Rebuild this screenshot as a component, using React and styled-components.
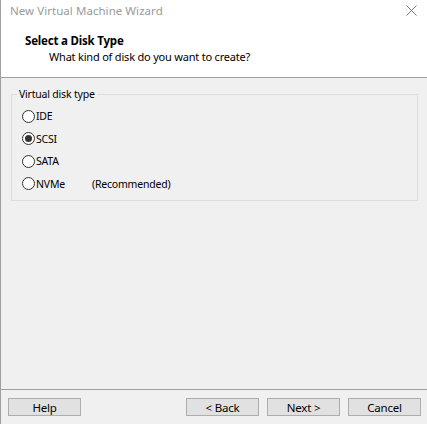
import React from 'react';
import styled, { createGlobalStyle } from 'styled-components';

const GlobalStyle = createGlobalStyle`
  html, body {
    margin: 0;
    padding: 0;
    background: #f0f0f0;
  }
  body {
    font-family: 'Segoe UI', 'Noto Sans', 'Liberation Sans', sans-serif;
    font-size: 11px;
    letter-spacing: -0.2px;
    color: #000;
  }
`;

const options = [
  { id: 'ide', label: 'IDE' },
  { id: 'scsi', label: 'SCSI', checked: true },
  { id: 'sata', label: 'SATA' },
  { id: 'nvme', label: 'NVMe', note: '(Recommended)' },
];

export default function App() {
  return (
    <>
      <GlobalStyle />
      <Window>
        <TitleBar>
          <Title>New Virtual Machine Wizard</Title>
          <CloseButton aria-label="Close">
            <svg width="11" height="11" viewBox="0 0 11 11">
              <path d="M0.5 0.5 L10.5 10.5 M10.5 0.5 L0.5 10.5" stroke="#777" strokeWidth="1" />
            </svg>
          </CloseButton>
        </TitleBar>
        <Header>
          <HeaderTitle>Select a Disk Type</HeaderTitle>
          <HeaderSub>What kind of disk do you want to create?</HeaderSub>
        </Header>
        <Body>
          <GroupBox>
            <Legend>Virtual disk type</Legend>
            {options.map((o) => (
              <RadioRow key={o.id}>
                <Radio checked={o.checked} />
                <RadioLabel>{o.label}</RadioLabel>
                {o.note && <Note>{o.note}</Note>}
              </RadioRow>
            ))}
          </GroupBox>
        </Body>
        <Footer>
          <Button>Help</Button>
          <Spacer />
          <Button>&lt; Back</Button>
          <Button>Next &gt;</Button>
          <Button>Cancel</Button>
        </Footer>
      </Window>
    </>
  );
}

const Window = styled.div`
  display: flex;
  flex-direction: column;
  width: 427px;
  height: 424px;
  box-sizing: border-box;
  border-left: 1px solid #a0a0a0;
  background: #f0f0f0;
  overflow: hidden;
`;

const TitleBar = styled.div`
  display: flex;
  align-items: center;
  justify-content: space-between;
  height: 24px;
  padding: 0 9px 0 9px;
  background: #fff;
`;

const Title = styled.div`
  color: #9a9a9a;
  font-size: 11.5px;
  letter-spacing: 0.05px;
  margin-top: -3px;
`;

const CloseButton = styled.div`
  display: flex;
  align-items: center;
  margin-right: 1px;
  margin-top: -3px;
`;

const Header = styled.div`
  display: flex;
  flex-direction: column;
  height: 53px;
  padding-left: 24px;
  background: #fff;
  border-bottom: 1px solid #a0a0a0;
`;

const HeaderTitle = styled.div`
  font-weight: bold;
  font-size: 11.5px;
  line-height: 16px;
  margin-top: 9px;
`;

const HeaderSub = styled.div`
  line-height: 16px;
  padding-left: 24px;
  margin-top: 0;
`;

const Body = styled.div`
  flex: 1;
  padding: 16px 9px 0 10px;
`;

const GroupBox = styled.div`
  position: relative;
  display: flex;
  flex-direction: column;
  gap: 6.5px;
  height: 107px;
  box-sizing: border-box;
  padding: 13px 0 0 10px;
  border: 1px solid #dcdcdc;
`;

const Legend = styled.div`
  position: absolute;
  top: -9px;
  left: 5px;
  padding: 0 2px;
  background: #f0f0f0;
  font-size: 10.5px;
  line-height: 16px;
`;

const RadioRow = styled.label`
  display: flex;
  align-items: center;
  height: 16px;
  font-size: 10.5px;
`;

const Radio = styled.span`
  position: relative;
  width: 11px;
  height: 11px;
  border: 1px solid #333;
  border-radius: 50%;
  background: #fff;
  margin-right: 1px;

  &::after {
    content: '';
    display: ${(p) => (p.checked ? 'block' : 'none')};
    position: absolute;
    top: 2px;
    left: 2px;
    width: 7px;
    height: 7px;
    border-radius: 50%;
    background: #333;
  }
`;

const RadioLabel = styled.span`
  width: 56px;
`;

const Note = styled.span``;

const Footer = styled.div`
  display: flex;
  align-items: flex-start;
  gap: 8px;
  height: 35px;
  padding: 8px 6px 0 7px;
  box-sizing: border-box;
  border-top: 1px solid #a0a0a0;
`;

const Spacer = styled.div`
  flex: 1;
`;

const Button = styled.div`
  display: flex;
  align-items: center;
  justify-content: center;
  width: 73px;
  height: 18px;
  box-sizing: border-box;
  border: 1px solid #adadad;
  background: #e1e1e1;
  font-size: 11.5px;
`;
